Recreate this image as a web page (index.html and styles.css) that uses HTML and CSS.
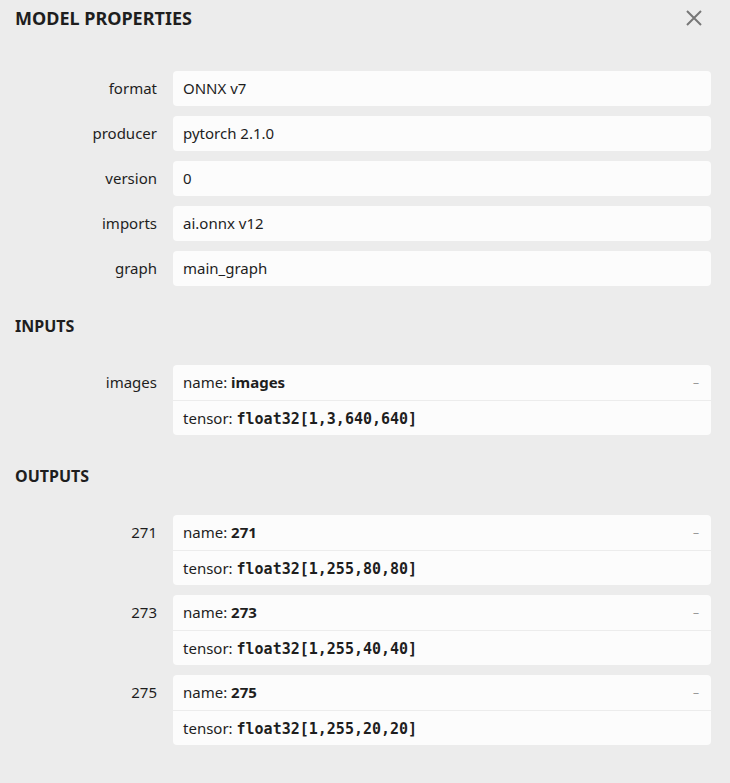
FILE: index.html
```html
<!DOCTYPE html>
<html>
<head>
<meta charset="utf-8">
<link rel="stylesheet" href="styles.css">
</head>
<body>
<div class="sidebar">
  <div class="header">
    <div class="title">MODEL PROPERTIES</div>
    <svg class="close" width="18" height="18" viewBox="0 0 18 18"><path d="M2 2 L16 16 M16 2 L2 16" stroke="#777" stroke-width="2" fill="none"/></svg>
  </div>
  <div class="props">
    <div class="row"><div class="label">format</div><div class="box"><div class="line">ONNX v7</div></div></div>
    <div class="row"><div class="label">producer</div><div class="box"><div class="line">pytorch 2.1.0</div></div></div>
    <div class="row"><div class="label">version</div><div class="box"><div class="line">0</div></div></div>
    <div class="row"><div class="label">imports</div><div class="box"><div class="line">ai.onnx v12</div></div></div>
    <div class="row"><div class="label">graph</div><div class="box"><div class="line">main_graph</div></div></div>
  </div>
  <div class="section">INPUTS</div>
  <div class="props">
    <div class="row"><div class="label">images</div><div class="box"><div class="line top">name: <b>images</b><span class="dash">–</span></div><div class="line bottom">tensor: <code>float32[1,3,640,640]</code></div></div></div>
  </div>
  <div class="section out">OUTPUTS</div>
  <div class="props">
    <div class="row"><div class="label">271</div><div class="box"><div class="line top">name: <b>271</b><span class="dash">–</span></div><div class="line bottom">tensor: <code>float32[1,255,80,80]</code></div></div></div>
    <div class="row"><div class="label">273</div><div class="box"><div class="line top">name: <b>273</b><span class="dash">–</span></div><div class="line bottom">tensor: <code>float32[1,255,40,40]</code></div></div></div>
    <div class="row"><div class="label">275</div><div class="box"><div class="line top">name: <b>275</b><span class="dash">–</span></div><div class="line bottom">tensor: <code>float32[1,255,20,20]</code></div></div></div>
  </div>
</div>
</body>
</html>
```
FILE: styles.css
```css
html, body {
  margin: 0;
  padding: 0;
  background: #ececec;
}
body {
  font-family: "Noto Sans", "Open Sans", sans-serif;
  font-size: 15px;
  color: #1e1e1e;
  width: 730px;
  height: 783px;
  overflow: hidden;
}
.sidebar {
  padding: 0 19px 0 15px;
}
.header {
  display: flex;
  justify-content: space-between;
  align-items: center;
  height: 36px;
}
.title {
  font-weight: bold;
  font-size: 18px;
}
.close {
  margin-right: 8px;
  margin-top: -1px;
}
.props {
  display: flex;
  flex-direction: column;
  gap: 10px;
  margin-top: 35px;
}
.row {
  display: grid;
  grid-template-columns: 142px 1fr;
  column-gap: 16px;
}
.label {
  text-align: right;
  line-height: 35px;
}
.box {
  background: #fcfcfc;
  border-radius: 4px;
}
.line {
  position: relative;
  height: 35px;
  line-height: 35px;
  padding: 0 10px;
}
.line.top {
  border-bottom: 1px solid #ececec;
}
.line.bottom {
  height: 34px;
  line-height: 34px;
}
.dash {
  position: absolute;
  right: 12px;
  top: 0;
  color: #999;
  font-size: 12px;
}
b {
  font-weight: bold;
}
code {
  font-family: "DejaVu Sans Mono", monospace;
  font-weight: bold;
  font-size: 15px;
}
.section {
  font-weight: bold;
  font-size: 16px;
  margin-top: 31px;
  line-height: 18px;
}
.section.out {
  margin-top: 32px;
}
.section + .props {
  margin-top: 30px;
}
```
